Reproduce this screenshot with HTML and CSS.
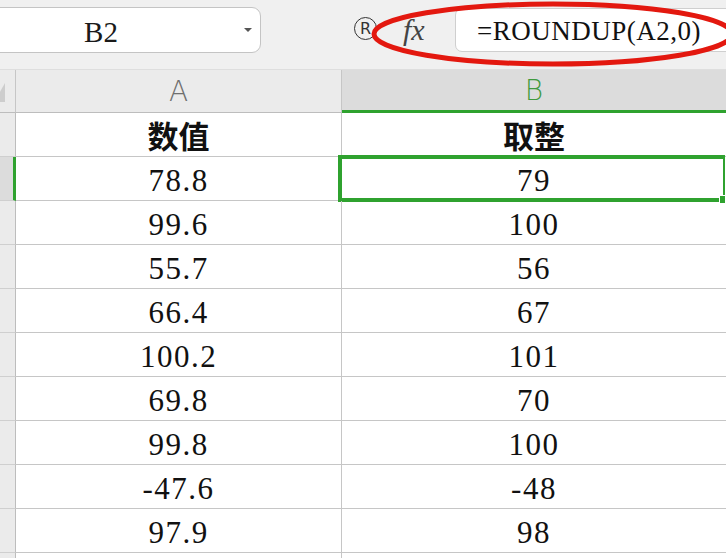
FILE: index.html
```html
<!DOCTYPE html>
<html lang="zh">
<head>
<meta charset="utf-8">
<title>ROUNDUP</title>
<link rel="stylesheet" href="styles.css">
</head>
<body>
<div class="app">
  <div class="toolbar">
    <div class="namebox">
      <span class="name">B2</span>
      <span class="drop"></span>
    </div>
    <span class="reg">R</span>
    <span class="fx">fx</span>
    <div class="formula">=ROUNDUP(A2,0)</div>
    <svg class="mark" width="726" height="70" viewBox="0 0 726 70">
      <ellipse cx="553" cy="34" rx="179" ry="30" fill="none" stroke="#e3180f" stroke-width="5"/>
    </svg>
  </div>
  <div class="sheet">
    <div class="corner"><span class="tri"></span></div>
    <div class="colhdr">A</div>
    <div class="colhdr sel">B</div>

    <div class="rowhdr"></div>
    <div class="cell head">数值</div>
    <div class="cell head">取整</div>

    <div class="rowhdr cur"></div>
    <div class="cell">78.8</div>
    <div class="cell active">79<span class="handle"></span></div>

    <div class="rowhdr"></div>
    <div class="cell">99.6</div>
    <div class="cell">100</div>

    <div class="rowhdr"></div>
    <div class="cell">55.7</div>
    <div class="cell">56</div>

    <div class="rowhdr"></div>
    <div class="cell">66.4</div>
    <div class="cell">67</div>

    <div class="rowhdr"></div>
    <div class="cell">100.2</div>
    <div class="cell">101</div>

    <div class="rowhdr"></div>
    <div class="cell">69.8</div>
    <div class="cell">70</div>

    <div class="rowhdr"></div>
    <div class="cell">99.8</div>
    <div class="cell">100</div>

    <div class="rowhdr"></div>
    <div class="cell">-47.6</div>
    <div class="cell">-48</div>

    <div class="rowhdr"></div>
    <div class="cell">97.9</div>
    <div class="cell">98</div>

    <div class="rowhdr"></div>
    <div class="cell"></div>
    <div class="cell"></div>
  </div>
</div>
</body>
</html>
```

FILE: styles.css
```css
html, body {
  margin: 0;
  padding: 0;
  background: #ffffff;
}
body {
  width: 726px;
  height: 558px;
  overflow: hidden;
  font-family: "Liberation Serif", "Noto Sans CJK SC", serif;
  color: #111111;
}
.app {
  width: 726px;
  height: 558px;
  overflow: hidden;
}
.toolbar {
  position: relative;
  height: 70px;
  box-sizing: border-box;
  background: #f0f0f0;
  border-bottom: 1px solid #dedede;
  display: flex;
  align-items: flex-start;
  padding-top: 7px;
}
.namebox {
  margin-left: -29px;
  width: 290px;
  height: 46px;
  box-sizing: border-box;
  background: #ffffff;
  border: 1px solid #c4c4c4;
  border-radius: 9px;
  display: flex;
  align-items: center;
}
.name {
  flex: 1;
  text-align: center;
  font-size: 29px;
  line-height: 44px;
  padding-top: 3px;
  color: #1a1a1a;
}
.drop {
  width: 0;
  height: 0;
  border-left: 4px solid transparent;
  border-right: 4px solid transparent;
  border-top: 4px solid #555555;
  margin-right: 8px;
  margin-left: 14px;
}
.reg {
  margin-left: 93px;
  margin-top: 10px;
  width: 23px;
  height: 23px;
  box-sizing: border-box;
  border: 1.7px solid #333333;
  border-radius: 50%;
  display: flex;
  align-items: center;
  justify-content: center;
  font-family: "DejaVu Sans", sans-serif;
  font-size: 16px;
  line-height: 1;
  color: #333333;
}
.fx {
  margin-left: 26px;
  width: 40px;
  height: 46px;
  line-height: 46px;
  font-family: "Liberation Serif", serif;
  font-style: italic;
  font-size: 30px;
  color: #444444;
}
.formula {
  margin-left: 12px;
  flex: 1;
  margin-right: -20px;
  height: 44px;
  margin-top: 1px;
  box-sizing: border-box;
  background: #ffffff;
  border: 1px solid #cfcfcf;
  border-radius: 7px 0 0 7px;
  padding-left: 21px;
  padding-top: 2px;
  line-height: 40px;
  font-size: 27px;
  letter-spacing: 0.5px;
  color: #111111;
  white-space: nowrap;
}
.mark {
  position: absolute;
  left: 0;
  top: 0;
  pointer-events: none;
}
.sheet {
  display: grid;
  grid-template-columns: 16px 326px 1fr;
  grid-template-rows: 43px repeat(10, 44px) 44px;
}
.sheet > div {
  box-sizing: border-box;
  border-right: 1px solid #c6c6c6;
  border-bottom: 1px solid #c6c6c6;
}
.corner {
  background: #ebebeb;
  border-bottom-color: #bdbdbd !important;
  position: relative;
  overflow: hidden;
}
.tri {
  position: absolute;
  left: -6px;
  top: 13px;
  width: 11px;
  height: 19px;
  background: #cdcdcd;
  clip-path: polygon(100% 0, 100% 100%, 0 100%);
}
.colhdr {
  background: #ebebeb;
  border-bottom-color: #bdbdbd !important;
  display: flex;
  align-items: center;
  justify-content: center;
  font-family: "DejaVu Sans", "Liberation Sans", sans-serif;
  font-weight: 300;
  font-size: 28px;
  color: #6f6f6f;
}
.colhdr.sel {
  background: #dcdcdc;
  color: #3f9a3f;
  border-bottom: 3px solid #2fa22f !important;
  border-right: none !important;
}
.rowhdr {
  background: #ebebeb;
  border-bottom-color: #cfcfcf !important;
  border-right-color: #bdbdbd !important;
}
.rowhdr.cur {
  background: #dcdcdc;
  border-right: 3px solid #2fa22f !important;
}
.cell {
  display: flex;
  align-items: center;
  justify-content: center;
  font-size: 31px;
  letter-spacing: 1.5px;
  padding-top: 4px;
  color: #111111;
  position: relative;
}
.cell.head {
  font-family: "Noto Sans CJK SC", sans-serif;
  font-weight: 700;
  font-size: 31px;
  letter-spacing: 0;
  padding-top: 0;
}
.sheet > div:nth-child(3n) {
  border-right: none;
}
.cell.active::before {
  content: "";
  position: absolute;
  left: -4px;
  top: -2px;
  right: 1px;
  bottom: -2px;
  border: 4px solid #2fa22f;
  border-right-width: 2px;
}
.handle {
  position: absolute;
  right: 0;
  bottom: -4px;
  width: 5px;
  height: 7px;
  background: #2fa22f;
  border: 1px solid #ffffff;
}
```
